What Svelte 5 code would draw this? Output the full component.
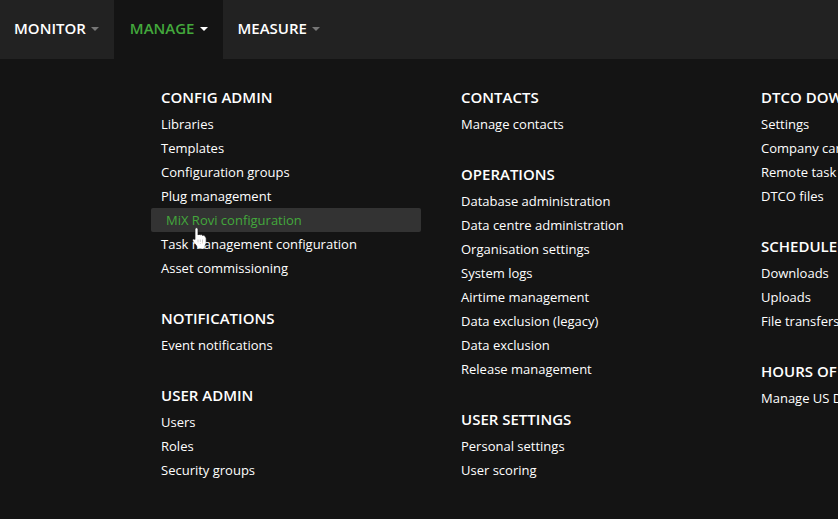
<script>
  const tabs = [
    { label: 'MONITOR' },
    { label: 'MANAGE', open: true },
    { label: 'MEASURE' }
  ];

  const columns = [
    [
      {
        title: 'CONFIG ADMIN',
        links: [
          'Libraries',
          'Templates',
          'Configuration groups',
          'Plug management',
          'MiX Rovi configuration',
          'Task management configuration',
          'Asset commissioning'
        ]
      },
      { title: 'NOTIFICATIONS', links: ['Event notifications'] },
      { title: 'USER ADMIN', links: ['Users', 'Roles', 'Security groups'] }
    ],
    [
      { title: 'CONTACTS', links: ['Manage contacts'] },
      {
        title: 'OPERATIONS',
        links: [
          'Database administration',
          'Data centre administration',
          'Organisation settings',
          'System logs',
          'Airtime management',
          'Data exclusion (legacy)',
          'Data exclusion',
          'Release management'
        ]
      },
      { title: 'USER SETTINGS', links: ['Personal settings', 'User scoring'] }
    ],
    [
      {
        title: 'DTCO DOWNLOADS',
        links: ['Settings', 'Company cards', 'Remote task queue', 'DTCO files']
      },
      { title: 'SCHEDULED', links: ['Downloads', 'Uploads', 'File transfers'] },
      { title: 'HOURS OF SERVICE', links: ['Manage US DOT'] }
    ]
  ];

  const hovered = 'MiX Rovi configuration';
</script>

<div class="page">
  <nav class="topbar">
    {#each tabs as tab}
      <button class="tab" class:open={tab.open}>
        <span>{tab.label}</span>
        <i class="caret"></i>
      </button>
    {/each}
  </nav>

  <div class="menu">
    {#each columns as sections}
      <div class="column">
        {#each sections as section}
          <section>
            <h3>{section.title}</h3>
            <ul>
              {#each section.links as link}
                <li class:hover={link === hovered}>
                  <span>{link}</span>
                  {#if link === hovered}
                    <svg class="cursor" width="15" height="23" viewBox="0 0 15 23">
                      <path
                        d="M3 2C3 .3 6 .3 6 2V8C6.500 7.200 8 7.200 8.300 8 8.800 7.400 10.200 7.400 10.500 8.500 11 8 12.800 8.200 13 9.500 14 10 14.200 11 14.200 12V16L13 19V22H5.500V20L1 14.500C-.2 12.800 1.500 11 3 12.500Z"
                        fill="#fff"
                        stroke="#1a1a1a"
                        stroke-width=".7"
                      />
                      <path d="M6 12.500v4.500M8.300 12.500v4.500M10.500 12.500v4.500" stroke="#aaa" stroke-width=".6" fill="none" />
                    </svg>
                  {/if}
                </li>
              {/each}
            </ul>
          </section>
        {/each}
      </div>
    {/each}
  </div>
</div>

<style>
  :global(body) {
    margin: 0;
    background: #141414;
  }

  .page {
    width: 838px;
    height: 519px;
    overflow: hidden;
    background: #141414;
    color: #fff;
    font-family: 'Open Sans', sans-serif;
  }

  .topbar {
    display: flex;
    height: 59px;
    background: #222;
  }

  .tab {
    display: flex;
    align-items: center;
    gap: 5px;
    padding: 0 15px 3px 14px;
    border: 0;
    background: none;
    color: #fff;
    font: 600 15px 'Open Sans', sans-serif;
  }

  .tab.open {
    padding: 0 15px 3px 16px;
    background: #141414;
  }

  .tab:last-child {
    padding-left: 15px;
  }

  .tab.open span {
    color: #43a83c;
  }

  .caret {
    width: 0;
    height: 0;
    margin-top: 1px;
    border-style: solid;
    border-width: 4px 4px 0;
    border-color: #777 transparent transparent;
  }

  .tab.open .caret {
    border-top-color: #fff;
  }

  .menu {
    display: flex;
    width: 1200px;
    padding: 26px 0 0 161px;
  }

  .column {
    display: flex;
    flex-direction: column;
    gap: 26px;
    width: 300px;
    flex: none;
  }

  h3 {
    margin: 0 0 2px;
    font-size: 15px;
    font-weight: 600;
    line-height: 25px;
  }

  ul {
    margin: 0;
    padding: 0;
    list-style: none;
  }

  li {
    position: relative;
    height: 24px;
    width: 260px;
    font-size: 13px;
    line-height: 24px;
    white-space: nowrap;
  }

  li.hover {
    margin-left: -10px;
    width: 270px;
    padding-left: 15px;
    box-sizing: border-box;
    border-radius: 2px;
    background: #333;
    color: #43a83c;
  }

  .cursor {
    position: absolute;
    left: 41px;
    top: 19px;
  }
</style>
